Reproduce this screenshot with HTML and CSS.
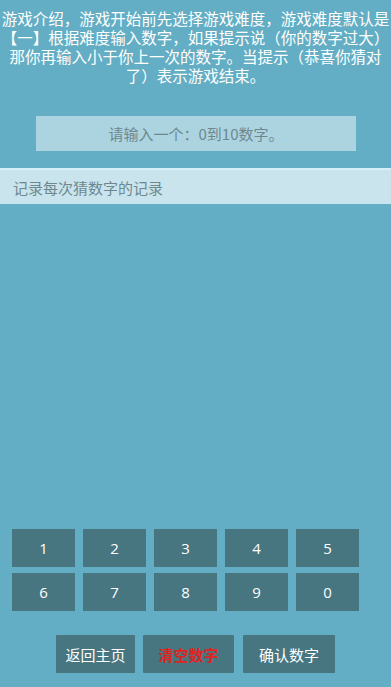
FILE: index.html
```html
<!DOCTYPE html>
<html>
<head>
<meta charset="utf-8">
<link rel="stylesheet" href="styles.css">
</head>
<body>
<div class="page">
  <p class="intro">游戏介绍，游戏开始前先选择游戏难度，游戏难度默认是【一】根据难度输入数字，如果提示说（你的数字过大）那你再输入小于你上一次的数字。当提示（恭喜你猜对了）表示游戏结束。</p>
  <div class="hint">请输入一个：0到10数字。</div>
  <div class="record">记录每次猜数字的记录</div>
  <div class="spacer"></div>
  <div class="keypad">
    <div class="key">1</div><div class="key">2</div><div class="key">3</div><div class="key">4</div><div class="key">5</div>
    <div class="key">6</div><div class="key">7</div><div class="key">8</div><div class="key">9</div><div class="key">0</div>
  </div>
  <div class="actions">
    <div class="btn b1">返回主页</div>
    <div class="btn b2 clear">清空数字</div>
    <div class="btn b3">确认数字</div>
  </div>
</div>
</body>
</html>
```
FILE: styles.css
```css
html, body {
  margin: 0;
  padding: 0;
  background: #63aec4;
}
body {
  font-family: "Noto Sans CJK SC", "Noto Sans", sans-serif;
}
.page {
  width: 391px;
  height: 687px;
  display: flex;
  flex-direction: column;
  overflow: hidden;
}
.intro {
  margin: 0;
  padding: 9px 0 0;
  font-size: 15.5px;
  line-height: 19px;
  color: #ffffff;
  text-align: center;
}
.hint {
  margin: 31px 0 0 36px;
  width: 320px;
  height: 35px;
  background: #acd4e0;
  color: #6e8890;
  font-size: 15px;
  display: flex;
  align-items: center;
  justify-content: center;
}
.record {
  margin-top: 17px;
  height: 34px;
  border-top: 2px solid #d6eff7;
  background: #c9e4ec;
  color: #6e8890;
  font-size: 15px;
  display: flex;
  align-items: center;
  padding-left: 13px;
}
.spacer {
  flex: 1;
}
.keypad {
  display: grid;
  grid-template-columns: repeat(5, 63px);
  grid-auto-rows: 38px;
  column-gap: 8px;
  row-gap: 6px;
  padding-left: 12px;
}
.key {
  background: #477680;
  color: #ffffff;
  font-family: "Open Sans", "Noto Sans", sans-serif;
  font-size: 15px;
  display: flex;
  align-items: center;
  justify-content: center;
}
.actions {
  display: flex;
  margin: 24px 0 14px 56px;
  height: 38px;
}
.btn {
  background: #477680;
  color: #ffffff;
  font-size: 15px;
  display: flex;
  align-items: center;
  justify-content: center;
  border-radius: 1px;
}
.b1 { width: 79px; }
.b2 { width: 91px; margin-left: 8px; }
.b3 { width: 92px; margin-left: 9px; }
.clear {
  color: #e0231f;
  font-weight: bold;
}
```
